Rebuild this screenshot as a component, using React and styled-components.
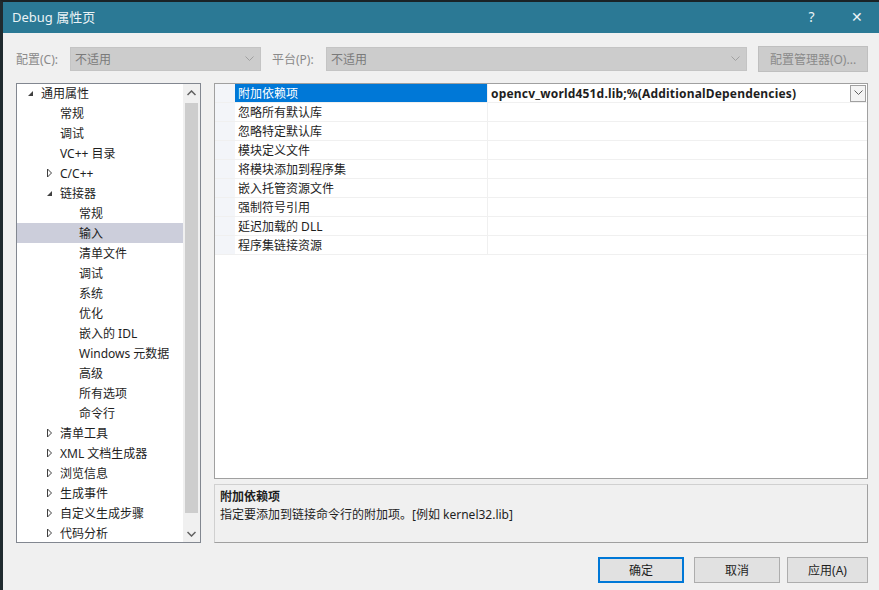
import React from "react";
import styled, { createGlobalStyle } from "styled-components";

const GlobalStyle = createGlobalStyle`
  html, body {
    margin: 0;
    padding: 0;
    background: #1d2427;
  }
  * {
    box-sizing: border-box;
  }
`;

const FONT = `"Noto Sans", "Noto Sans CJK SC", sans-serif`;

const Window = styled.div`
  width: 879px;
  height: 590px;
  display: flex;
  flex-direction: column;
  border-top: 2px solid #1a2326;
  border-left: 3px solid #1f2a2e;
  background: #f0f0f0;
  font-family: ${FONT};
  font-size: 12px;
  color: #1e1e1e;
  overflow: hidden;
`;

const TitleBar = styled.div`
  height: 31px;
  flex: none;
  display: flex;
  align-items: center;
  background: #2b7995;
  color: #eaf3f6;
  padding-left: 9px;
  padding-bottom: 2px;
  font-size: 13px;
`;

const TitleText = styled.div`
  flex: 1;
`;

const TitleButton = styled.div`
  width: 45px;
  height: 29px;
  display: flex;
  align-items: center;
  justify-content: center;
  font-size: 14px;
`;

const Body = styled.div`
  flex: 1;
  display: flex;
  flex-direction: column;
  padding: 14px 11px 0 13px;
`;

const Toolbar = styled.div`
  height: 24px;
  display: flex;
  align-items: center;
`;

const Label = styled.span`
  color: #8a8a8a;
  width: ${(p) => p.$w}px;
  flex: none;
`;

const Combo = styled.div`
  width: ${(p) => p.$w}px;
  height: 24px;
  flex: none;
  display: flex;
  align-items: center;
  background: #cccccc;
  border: 1px solid #c4c4c4;
  color: #7a7a7a;
  padding-left: 4px;
  margin-right: ${(p) => p.$mr || 0}px;
`;

const ComboText = styled.span`
  flex: 1;
`;

const Chevron = ({ color = "#a0a0a0" }) => (
  <svg width="9" height="6" viewBox="0 0 9 6" style={{ marginRight: 6 }}>
    <path d="M0.5 0.5 L4.5 4.5 L8.5 0.5" fill="none" stroke={color} strokeWidth="1" />
  </svg>
);

const ManagerButton = styled.div`
  width: 110px;
  height: 26px;
  display: flex;
  align-items: center;
  justify-content: center;
  background: #cccccc;
  border: 1px solid #bfbfbf;
  color: #8a8a8a;
`;

const Main = styled.div`
  display: flex;
  margin-top: 12px;
  height: 460px;
`;

const Tree = styled.div`
  width: 185px;
  flex: none;
  display: flex;
  background: #ffffff;
  border: 1px solid #828790;
`;

const TreeList = styled.div`
  flex: 1;
  margin-top: -1px;
`;

const TreeRow = styled.div`
  height: 20px;
  display: flex;
  align-items: center;
  padding-left: ${(p) => 10 + p.$level * 19}px;
  background: ${(p) => (p.$selected ? "#cccedb" : "transparent")};
`;

const Arrow = styled.span`
  width: 14px;
  height: 20px;
  display: flex;
  align-items: center;
  flex: none;
`;

const ScrollBar = styled.div`
  width: 17px;
  flex: none;
  display: flex;
  flex-direction: column;
  background: #f0f0f0;
`;

const ScrollArrow = styled.div`
  height: 17px;
  display: flex;
  align-items: center;
  justify-content: center;
`;

const ScrollThumb = styled.div`
  flex: 1;
  margin: 2px 2px 12px;
  background: #cdcdcd;
`;

const RightColumn = styled.div`
  flex: 1;
  display: flex;
  flex-direction: column;
  margin-left: 13px;
`;

const Grid = styled.div`
  height: 397px;
  background: #ffffff;
  border: 1px solid #a0a0a0;
`;

const GridRow = styled.div`
  height: 19px;
  display: flex;
  border-bottom: 1px solid #f0f0f0;
`;

const Gutter = styled.div`
  width: 20px;
  flex: none;
  background: #f3f5f9;
`;

const NameCell = styled.div`
  width: 253px;
  flex: none;
  display: flex;
  align-items: center;
  padding-left: 3px;
  border-right: 1px solid #f0f0f0;
  background: ${(p) => (p.$selected ? "#0078d7" : "transparent")};
  color: ${(p) => (p.$selected ? "#ffffff" : "#1e1e1e")};
`;

const ValueCell = styled.div`
  flex: 1;
  display: flex;
  align-items: center;
  padding-left: 3px;
  font-weight: 700;
  font-size: 12px;
`;

const ValueText = styled.span`
  flex: 1;
  letter-spacing: 0.18px;
`;

const DropButton = styled.div`
  width: 16px;
  height: 17px;
  margin-right: 1px;
  display: flex;
  align-items: center;
  justify-content: center;
  border: 1px solid #a0a0a0;
  background: #f4f4f4;
`;

const Description = styled.div`
  height: 59px;
  margin-top: 5px;
  border: 1px solid #a0a0a0;
  border-top-color: #d0d0d0;
  border-left-color: #d0d0d0;
  padding: 3px 5px;
  line-height: 18px;
`;

const DescTitle = styled.div`
  font-weight: 700;
`;

const Footer = styled.div`
  display: flex;
  justify-content: flex-end;
  margin-top: 14px;
`;

const Button = styled.div`
  width: ${(p) => p.$w}px;
  height: 26px;
  margin-left: ${(p) => p.$ml || 0}px;
  display: flex;
  align-items: center;
  justify-content: center;
  background: #e1e1e1;
  border: ${(p) => (p.$primary ? "2px solid #0078d7" : "1px solid #adadad")};
`;

const Expanded = () => (
  <svg width="7" height="7" viewBox="0 0 7 7">
    <path d="M6 1 L6 6 L1 6 Z" fill="#404040" />
  </svg>
);

const Collapsed = () => (
  <svg width="7" height="10" viewBox="0 0 7 10">
    <path d="M1.5 1 L5.5 5 L1.5 9 Z" fill="none" stroke="#404040" strokeWidth="1" />
  </svg>
);

const treeItems = [
  { t: "通用属性", l: 0, a: "open" },
  { t: "常规", l: 1 },
  { t: "调试", l: 1 },
  { t: "VC++ 目录", l: 1 },
  { t: "C/C++", l: 1, a: "closed" },
  { t: "链接器", l: 1, a: "open" },
  { t: "常规", l: 2 },
  { t: "输入", l: 2, sel: true },
  { t: "清单文件", l: 2 },
  { t: "调试", l: 2 },
  { t: "系统", l: 2 },
  { t: "优化", l: 2 },
  { t: "嵌入的 IDL", l: 2 },
  { t: "Windows 元数据", l: 2 },
  { t: "高级", l: 2 },
  { t: "所有选项", l: 2 },
  { t: "命令行", l: 2 },
  { t: "清单工具", l: 1, a: "closed" },
  { t: "XML 文档生成器", l: 1, a: "closed" },
  { t: "浏览信息", l: 1, a: "closed" },
  { t: "生成事件", l: 1, a: "closed" },
  { t: "自定义生成步骤", l: 1, a: "closed" },
  { t: "代码分析", l: 1, a: "closed" },
];

const properties = [
  "附加依赖项",
  "忽略所有默认库",
  "忽略特定默认库",
  "模块定义文件",
  "将模块添加到程序集",
  "嵌入托管资源文件",
  "强制符号引用",
  "延迟加载的 DLL",
  "程序集链接资源",
];

function App() {
  return (
    <Window>
      <GlobalStyle />
      <TitleBar>
        <TitleText>Debug 属性页</TitleText>
        <TitleButton>?</TitleButton>
        <TitleButton>✕</TitleButton>
      </TitleBar>
      <Body>
        <Toolbar>
          <Label $w={54}>配置(C):</Label>
          <Combo $w={191} $mr={11}>
            <ComboText>不适用</ComboText>
            <Chevron />
          </Combo>
          <Label $w={54}>平台(P):</Label>
          <Combo $w={421} $mr={11}>
            <ComboText>不适用</ComboText>
            <Chevron />
          </Combo>
          <ManagerButton>配置管理器(O)...</ManagerButton>
        </Toolbar>
        <Main>
          <Tree>
            <TreeList>
              {treeItems.map((it, i) => (
                <TreeRow key={i} $level={it.l} $selected={it.sel}>
                  <Arrow>
                    {it.a === "open" && <Expanded />}
                    {it.a === "closed" && <Collapsed />}
                  </Arrow>
                  {it.t}
                </TreeRow>
              ))}
            </TreeList>
            <ScrollBar>
              <ScrollArrow>
                <svg width="9" height="6" viewBox="0 0 9 6">
                  <path d="M0.5 5 L4.5 1 L8.5 5" fill="none" stroke="#606060" strokeWidth="1.5" />
                </svg>
              </ScrollArrow>
              <ScrollThumb />
              <ScrollArrow>
                <svg width="9" height="6" viewBox="0 0 9 6">
                  <path d="M0.5 1 L4.5 5 L8.5 1" fill="none" stroke="#606060" strokeWidth="1.5" />
                </svg>
              </ScrollArrow>
            </ScrollBar>
          </Tree>
          <RightColumn>
            <Grid>
              {properties.map((p, i) => (
                <GridRow key={p}>
                  <Gutter />
                  <NameCell $selected={i === 0}>{p}</NameCell>
                  <ValueCell>
                    {i === 0 && (
                      <>
                        <ValueText>opencv_world451d.lib;%(AdditionalDependencies)</ValueText>
                        <DropButton>
                          <svg width="9" height="6" viewBox="0 0 9 6">
                            <path d="M0.5 0.5 L4.5 4.5 L8.5 0.5" fill="none" stroke="#606060" strokeWidth="1" />
                          </svg>
                        </DropButton>
                      </>
                    )}
                  </ValueCell>
                </GridRow>
              ))}
            </Grid>
            <Description>
              <DescTitle>附加依赖项</DescTitle>
              <div>指定要添加到链接命令行的附加项。[例如 kernel32.lib]</div>
            </Description>
          </RightColumn>
        </Main>
        <Footer>
          <Button $w={86} $primary>确定</Button>
          <Button $w={86} $ml={10}>取消</Button>
          <Button $w={81} $ml={7}>应用(A)</Button>
        </Footer>
      </Body>
    </Window>
  );
}

export default App;
